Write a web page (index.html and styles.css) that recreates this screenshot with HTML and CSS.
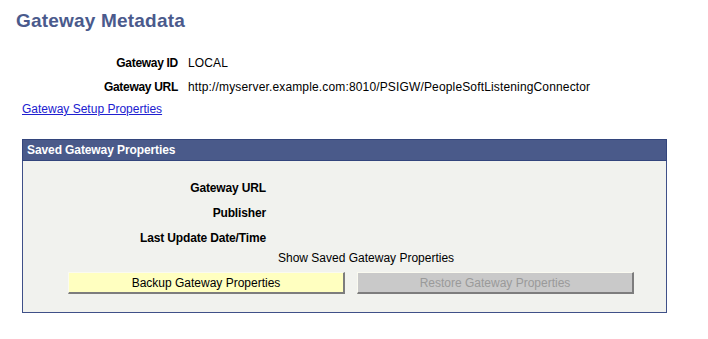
FILE: index.html
```html
<!DOCTYPE html>
<html>
<head>
<meta charset="utf-8">
<link rel="stylesheet" href="styles.css">
</head>
<body>
<div class="page">
  <h1 class="title">Gateway Metadata</h1>
  <div class="fields">
    <div class="label">Gateway ID</div><div class="value">LOCAL</div>
    <div class="label">Gateway URL</div><div class="value">http://myserver.example.com:8010/PSIGW/PeopleSoftListeningConnector</div>
  </div>
  <a class="link" href="#">Gateway Setup Properties</a>
  <div class="box">
    <div class="box-head">Saved Gateway Properties</div>
    <div class="box-body">
      <div class="saved">
        <div class="label">Gateway URL</div><div class="value"></div>
        <div class="label">Publisher</div><div class="value"></div>
        <div class="label">Last Update Date/Time</div><div class="value"></div>
      </div>
      <div class="show">Show Saved Gateway Properties</div>
      <div class="buttons">
        <button class="btn btn-primary">Backup Gateway Properties</button>
        <button class="btn btn-disabled" disabled>Restore Gateway Properties</button>
      </div>
    </div>
  </div>
</div>
</body>
</html>
```
FILE: styles.css
```css
html, body {
  margin: 0;
  padding: 0;
  background: #ffffff;
}
body {
  font-family: "Liberation Sans", Arial, sans-serif;
  font-size: 12px;
  color: #000000;
}
.page {
  padding: 10px 0 0 0;
}
.title {
  margin: 0 0 0 16px;
  font-size: 19px;
  line-height: 22px;
  font-weight: bold;
  color: #4a5a8c;
  letter-spacing: 0.2px;
}
.fields {
  display: grid;
  grid-template-columns: 162px auto;
  column-gap: 10px;
  margin-top: 19px;
  margin-left: 16px;
}
.fields .label,
.fields .value {
  line-height: 24px;
  height: 24px;
}
.fields .value {
  letter-spacing: 0.15px;
}
.label {
  font-weight: bold;
  text-align: right;
  letter-spacing: -0.3px;
}
.link {
  display: block;
  margin-top: 1px;
  margin-left: 22px;
  line-height: 18px;
  color: #2020d0;
  text-decoration: underline;
  width: max-content;
}
.box {
  margin: 21px 0 0 22px;
  width: 643px;
  border: 1px solid #3f5088;
  background: #f1f2ee;
}
.box-head {
  height: 20px;
  line-height: 20px;
  background: #4a5a8a;
  border: 1px solid #33457c;
  margin: -1px -1px 0 -1px;
  color: #ffffff;
  font-weight: bold;
  padding-left: 4px;
  letter-spacing: -0.1px;
}
.box-body {
  padding: 15px 0 18px 0;
}
.saved {
  display: grid;
  grid-template-columns: 243px auto;
  column-gap: 12px;
}
.saved .label {
  letter-spacing: -0.15px;
}
.saved .label,
.saved .value {
  height: 25px;
  line-height: 25px;
}
.show {
  margin-left: 255px;
  line-height: 14px;
  height: 14px;
}
.buttons {
  display: flex;
  gap: 12px;
  margin: 7px 0 0 45px;
}
.btn {
  width: 277px;
  height: 22px;
  padding: 0;
  font-family: "Liberation Sans", Arial, sans-serif;
  font-size: 12px;
  border-style: solid;
  border-width: 1px 2px 2px 1px;
  border-color: #fafaf0 #7d7d7d #7d7d7d #fafaf0;
}
.btn-primary {
  background: #ffffc0;
  color: #000000;
}
.btn-disabled {
  background: #c9c9c9;
  color: #9a9a9a;
}
```
